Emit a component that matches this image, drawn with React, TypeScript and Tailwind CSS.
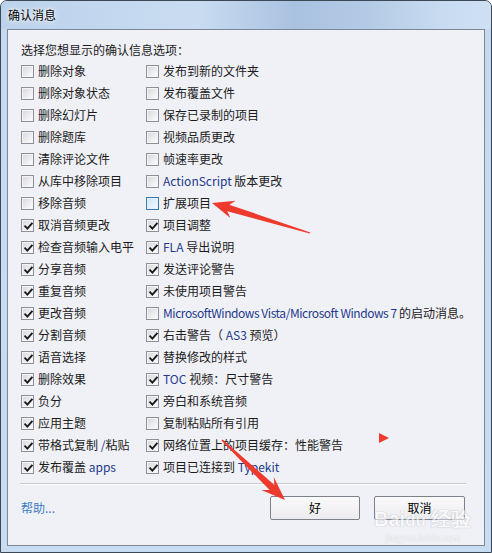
import React from "react";

type Seg = string | { l: string; tight?: boolean };
type Item = { t: Seg[]; c: boolean; h?: boolean };

const left: Item[] = [
  { t: ["删除对象"], c: false },
  { t: ["删除对象状态"], c: false },
  { t: ["删除幻灯片"], c: false },
  { t: ["删除题库"], c: false },
  { t: ["清除评论文件"], c: false },
  { t: ["从库中移除项目"], c: false },
  { t: ["移除音频"], c: false },
  { t: ["取消音频更改"], c: true },
  { t: ["检查音频输入电平"], c: true },
  { t: ["分享音频"], c: true },
  { t: ["重复音频"], c: true },
  { t: ["更改音频"], c: true },
  { t: ["分割音频"], c: true },
  { t: ["语音选择"], c: true },
  { t: ["删除效果"], c: true },
  { t: ["负分"], c: true },
  { t: ["应用主题"], c: true },
  { t: ["带格式复制 ", { l: "/" }, "粘贴"], c: true },
  { t: ["发布覆盖 ", { l: " apps" }], c: true },
];

const right: Item[] = [
  { t: ["发布到新的文件夹"], c: false },
  { t: ["发布覆盖文件"], c: false },
  { t: ["保存已录制的项目"], c: false },
  { t: ["视频品质更改"], c: false },
  { t: ["帧速率更改"], c: false },
  { t: [{ l: "ActionScript " }, "版本更改"], c: false },
  { t: ["扩展项目"], c: false, h: true },
  { t: ["项目调整"], c: true },
  { t: [{ l: "FLA " }, "导出说明"], c: true },
  { t: ["发送评论警告"], c: true },
  { t: ["未使用项目警告"], c: true },
  { t: [{ l: "MicrosoftWindows Vista/Microsoft Windows 7 ", tight: true }, "的启动消息。"], c: false },
  { t: ["右击警告（ ", { l: "AS3 " }, "预览）"], c: true },
  { t: ["替换修改的样式"], c: true },
  { t: [{ l: "TOC " }, "视频：尺寸警告"], c: true },
  { t: ["旁白和系统音频"], c: true },
  { t: ["复制粘贴所有引用"], c: false },
  { t: ["网络位置上的项目缓存：性能警告"], c: true },
  { t: ["项目已连接到 ", { l: "Typekit" }], c: true },
];

function Box({ checked, hover }: { checked: boolean; hover?: boolean }) {
  return (
    <div
      className={
        "w-[13px] h-[13px] shrink-0 border p-[1px] " +
        (hover ? "border-[#3d7bad] bg-[#def0fb]" : "border-[#8d8f99] bg-[#f4f4f6]")
      }
    >
      <div
        className={
          "w-full h-full relative " +
          (hover
            ? "bg-[linear-gradient(135deg,#cfe6f6,#f3f9fd)]"
            : "bg-[linear-gradient(135deg,#d9dae0,#fbfbfc)]")
        }
      >
        {checked && (
          <svg width="11" height="11" viewBox="0 0 11 11" className="absolute left-0 top-0">
            <polyline
              points="2.2,5.3 4.4,7.6 8.8,2.6"
              fill="none"
              stroke="#1a1a1a"
              strokeWidth="1.9"
              strokeLinecap="square"
            />
          </svg>
        )}
      </div>
    </div>
  );
}

function Row({ item }: { item: Item }) {
  return (
    <div className="h-[22px] flex items-center whitespace-nowrap">
      <Box checked={item.c} hover={item.h} />
      <span className="ml-[4px] leading-[22px]">
        {item.t.map((s, i) =>
          typeof s === "string" ? (
            <span key={i}>{s}</span>
          ) : (
            <span key={i} className={"text-[#243a8c]" + (s.tight ? " tracking-[-0.45px]" : "")}>
              {s.l}
            </span>
          )
        )}
      </span>
    </div>
  );
}

export default function App() {
  const rows = left.map((l, i) => [l, right[i]] as const);
  return (
    <div
      className="w-[492px] h-[553px] relative overflow-hidden text-[12px] text-[#1b1b1b]"
      style={{ fontFamily: '"Noto Sans CJK SC", "Noto Sans", sans-serif' }}
    >
      <div className="w-full h-full flex flex-col border border-[#3c4856] rounded-t-[7px] bg-[linear-gradient(180deg,#bcd3ec_0%,#c5daf1_6%,#c8dcf2_100%)]">
        <div className="h-[28px] shrink-0 flex items-center pl-[7px] bg-[linear-gradient(90deg,#bcd2ec_0%,#c9dcf1_40%,#a9c2e0_60%,#b4cbe6_75%,#c8dbf0_90%,#cfe0f3_100%)] rounded-t-[6px]">
          <span className="text-[12px] text-black leading-none [text-shadow:0_0_6px_#ffffff,0_0_3px_#ffffff]">
            确认消息
          </span>
        </div>
        <div className="flex-1 mx-[6px] mb-[6px] border border-[#7d8896] bg-[#f0f1f7] flex flex-col">
          <div className="pl-[13px] pt-[9px]">
            <div className="h-[21px] leading-[21px]">选择您想显示的确认信息选项：</div>
            <div className="grid grid-cols-[125px_1fr]">
              {rows.map(([l, r], i) => (
                <React.Fragment key={i}>
                  <Row item={l} />
                  <Row item={r} />
                </React.Fragment>
              ))}
            </div>
          </div>
          <div className="mt-[5px] ml-[12px] mr-[18px] h-[2px] border-t border-[#c8cad3] bg-white" />
          <div className="flex items-center mt-[11px] ml-[13px] mr-[19px]">
            <span className="text-[#3b7bc6] flex-1">帮助...</span>
            <button className="w-[90px] h-[24px] border border-[#7c818a] rounded-[2px] bg-[linear-gradient(180deg,#fafafb,#ececef)] text-[12px] text-black">
              好
            </button>
            <button className="ml-[14px] w-[91px] h-[24px] border border-[#7c818a] rounded-[2px] bg-[linear-gradient(180deg,#fafafb,#ececef)] text-[12px] text-black">
              取消
            </button>
          </div>
        </div>
      </div>

      {/* watermark */}
      <div className="absolute left-[374px] top-[509px] pointer-events-none flex flex-col items-center opacity-60">
        <span
          className="text-[20px] font-bold leading-none text-white [text-shadow:0_0_1px_#9aa0aa,0_0_1px_#9aa0aa]"
          style={{ fontFamily: '"Liberation Sans", sans-serif' }}
        >
          Bai<span className="text-[17px]">du</span> 经验
        </span>
        <span
          className="text-[10px] leading-none mt-[4px] text-white [text-shadow:0_0_1px_#9aa0aa]"
          style={{ fontFamily: '"Liberation Serif", serif' }}
        >
          jingyan.baidu.com
        </span>
      </div>

      {/* annotations */}
      <svg className="absolute left-0 top-0 pointer-events-none" width="492" height="553" viewBox="0 0 492 553">
        <polygon
          points="212,203 235.6,200.8 229.3,204.7 310.3,232.4 309.7,233.6 227.3,211.3 230.4,218 "
          fill="#ee3a2c"
        />
        <polygon
          points="285,500 261.4,489.9 269.6,490.1 221.4,440.6 222.6,439.4 274.4,485.1 273.8,476.9"
          fill="#ee3a2c"
        />
        <polygon points="379,433 389,438 379,443" fill="#ee3a2c" />
      </svg>
    </div>
  );
}
